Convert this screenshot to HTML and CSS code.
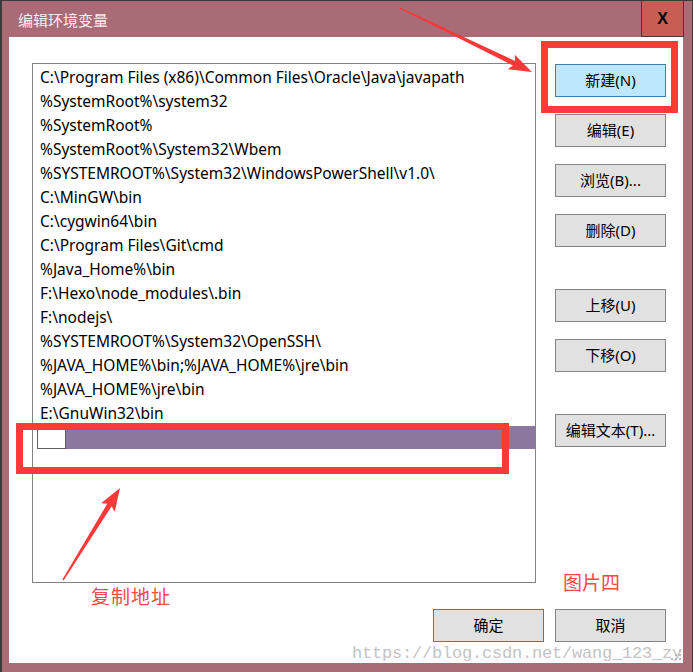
FILE: index.html
```html
<!DOCTYPE html>

<html>
  <head>
    <meta charset="utf-8">
    <title>编辑环境变量</title>
    <link rel="stylesheet" href="styles.css">
  </head>
  <body>
    <div class="window">
      <div class="titlebar">
        <span class="title">编辑环境变量</span>
        <span class="close">X</span>
      </div>
      <div class="client">
        <div class="main">
          <ul class="list">
            <li>C:\Program Files (x86)\Common Files\Oracle\Java\javapath</li>
            <li>%SystemRoot%\system32</li>
            <li>%SystemRoot%</li>
            <li>%SystemRoot%\System32\Wbem</li>
            <li>%SYSTEMROOT%\System32\WindowsPowerShell\v1.0\</li>
            <li>C:\MinGW\bin</li>
            <li>C:\cygwin64\bin</li>
            <li>C:\Program Files\Git\cmd</li>
            <li>%Java_Home%\bin</li>
            <li>F:\Hexo\node_modules\.bin</li>
            <li>F:\nodejs\</li>
            <li>%SYSTEMROOT%\System32\OpenSSH\</li>
            <li>%JAVA_HOME%\bin;%JAVA_HOME%\jre\bin</li>
            <li>%JAVA_HOME%\jre\bin</li>
            <li>E:\GnuWin32\bin</li>
            <li class="editing"><span class="editbox"></span><span class="selbar"></span></li>
          </ul>
          <div class="side">
            <button class="btn default">新建(N)</button>
            <button class="btn">编辑(E)</button>
            <button class="btn">浏览(B)...</button>
            <button class="btn">删除(D)</button>
            <button class="btn spaced">上移(U)</button>
            <button class="btn">下移(O)</button>
            <button class="btn spaced">编辑文本(T)...</button>
          </div>
        </div>
        <div class="footer">
          <button class="btn ok">确定</button>
          <button class="btn">取消</button>
        </div>
      </div>

      <!-- annotations drawn over the screenshot -->
      <div class="mark mark-new"></div>
      <div class="mark mark-row"></div>
      <span class="note note-copy">复制地址</span>
      <span class="note note-pic">图片四</span>
      <span class="watermark">https://blog.csdn.net/wang_123_zy</span>
      <svg class="arrows" width="693" height="672" viewBox="0 0 693 672">
        <polygon points="399.7,8.6 512.9,65.5 507.8,69.2 532,72 514.8,54.8 515.1,61.0 400.3,7.4" fill="#fd3838"/>
        <polygon points="63.6,580.4 111.6,506.3 114.7,511.8 120,488 101.1,503.3 107.3,503.7 62.4,579.6" fill="#fd3838"/>
        <g fill="#b9b9b9">
          <rect x="679" y="650" width="2" height="2"/>
          <rect x="675" y="654" width="2" height="2"/>
          <rect x="679" y="654" width="2" height="2"/>
          <rect x="671" y="658" width="2" height="2"/>
          <rect x="675" y="658" width="2" height="2"/>
          <rect x="679" y="658" width="2" height="2"/>
        </g>
      </svg>
    </div>
  </body>
</html>
```

FILE: styles.css
```css
* {
box-sizing: border-box;
}
body {
margin: 0;
background: #ffffff;
}
.window {
position: relative;
width: 693px;
height: 672px;
background-color: #a96b76;
border-top: 1px solid #3e3a3b;
border-left: 2px solid #3e3a3b;
border-right: 1px solid #3e3a3b;
font-family: "Noto Sans", "Noto Sans CJK SC", sans-serif;
font-size: 15px;
color: #000000;
overflow: hidden;
}
.titlebar {
display: flex;
align-items: center;
justify-content: space-between;
height: 36px;
padding-left: 16px;
}
.title {
color: #f6eef0;
font-family: "Noto Sans CJK SC", sans-serif;
font-size: 15px;
}
.close {
display: flex;
align-items: center;
justify-content: center;
width: 43px;
height: 36px;
margin-right: 8px;
background-color: #c65e55;
border: 1px solid #4e3636;
border-top: 0;
font-family: "Liberation Sans", sans-serif;
font-weight: bold;
font-size: 16px;
}
.client {
height: 626px;
margin: 0 9px 0 7px;
padding: 26px 17px 0 23px;
background-color: #ffffff;
}
.main {
display: flex;
}
.list {
width: 504px;
height: 520px;
margin: 0;
padding: 1px 0 0 0;
list-style: none;
border: 1px solid #838383;
font-size: 15.5px;
}
.list li {
height: 24px;
line-height: 24px;
padding-left: 7px;
white-space: nowrap;
}
.list .editing {
display: flex;
align-items: flex-end;
padding-left: 4px;
}
.editbox {
width: 29px;
height: 21px;
border: 1px solid #5e5e5e;
background: #ffffff;
}
.selbar {
flex: 1;
height: 23px;
background-color: #8c77a1;
}
.side {
display: flex;
flex-direction: column;
gap: 17px;
margin-left: 19px;
padding-top: 1px;
}
.btn {
width: 111px;
height: 33px;
padding: 0 0 3px 0;
background-color: #e1e1e1;
border: 1px solid #858585;
font-family: "Noto Sans", "Noto Sans CJK SC", sans-serif;
font-size: 15px;
color: #000000;
}
.btn.default {
background-color: #bee6fd;
border-color: #3c7fb1;
}
.btn.ok {
border-color: #3c7fb1;
}
.btn.spaced {
margin-top: 25px;
}
.footer {
display: flex;
justify-content: flex-end;
gap: 11px;
margin-top: 26px;
}
.mark {
position: absolute;
border: 7px solid #fc3a3a;
}
.mark-new {
left: 539px;
top: 40px;
width: 137px;
height: 72px;
}
.mark-row {
left: 14px;
top: 422px;
width: 493px;
height: 51px;
}
.note {
position: absolute;
font-family: "Noto Sans CJK SC", sans-serif;
font-size: 19px;
line-height: 20px;
color: #f84848;
}
.note-copy {
left: 89px;
top: 585px;
letter-spacing: 1px;
}
.note-pic {
left: 561px;
top: 571px;
}
.watermark {
position: absolute;
left: 350px;
top: 643px;
font-family: "Liberation Mono", monospace;
font-size: 17px;
line-height: 20px;
letter-spacing: -0.2px;
color: #c4c4c4;
white-space: nowrap;
}
.arrows {
position: absolute;
left: -2px;
top: -1px;
pointer-events: none;
}
```
